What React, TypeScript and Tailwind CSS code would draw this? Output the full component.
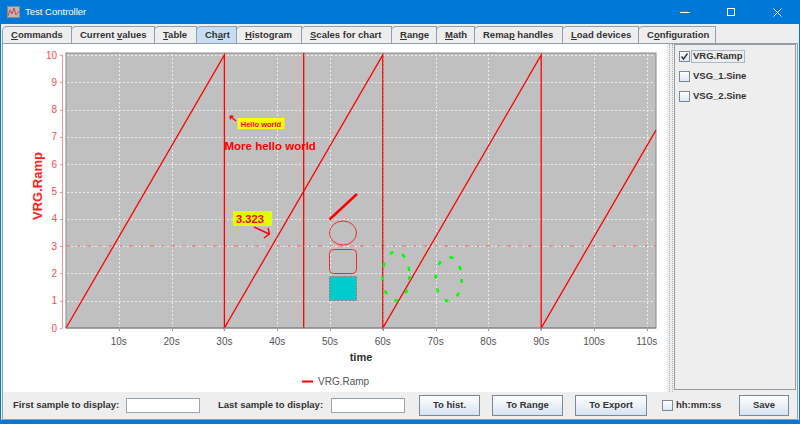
import React from 'react'

const X = (t: number) => 66 + t * 5.28
const Y = (v: number) => 328 - v * 27.3

const tabs: { label: string; u: number; w: number; active?: boolean }[] = [
  { label: 'Commands', u: 0, w: 70 },
  { label: 'Current values', u: 8, w: 84 },
  { label: 'Table', u: 0, w: 43 },
  { label: 'Chart', u: 2, w: 41, active: true },
  { label: 'Histogram', u: 0, w: 66 },
  { label: 'Scales for chart', u: 0, w: 91 },
  { label: 'Range', u: 0, w: 46 },
  { label: 'Math', u: 0, w: 39 },
  { label: 'Remap handles', u: 4, w: 89 },
  { label: 'Load devices', u: 0, w: 77 },
  { label: 'Configuration', u: 1, w: 78 },
]

const Tab = ({ label, u, w, active }: { label: string; u: number; w: number; active?: boolean }) => (
  <div
    style={{ width: w }}
    className={`h-[17px] flex items-center pl-[8px] border border-b-0 border-[#8e9fb3] rounded-tl-[5px] text-[9.5px] font-bold text-[#333] whitespace-pre ${
      active ? 'bg-[#c8ddf2]' : 'bg-[#eeeeee]'
    } -ml-px first:ml-0`}
  >
    <span>
      {label.slice(0, u)}
      <span className="underline">{label[u]}</span>
      {label.slice(u + 1)}
    </span>
  </div>
)

const Button = ({ children, w }: { children: React.ReactNode; w: string }) => (
  <div
    className={`${w} h-[21px] flex items-center justify-center border border-[#7a8a99] bg-gradient-to-b from-white to-[#d6e3f1] text-[9.5px] font-bold text-[#333]`}
  >
    {children}
  </div>
)

const Check = ({ on }: { on?: boolean }) => (
  <div className="w-[11px] h-[11px] border border-[#7a8a99] bg-gradient-to-b from-white to-[#dce6f2] flex items-center justify-center">
    {on && (
      <svg width="9" height="9" viewBox="0 0 9 9">
        <path d="M1.5 4.5 L3.5 7 L7.5 1.5" stroke="#333" strokeWidth="1.4" fill="none" />
      </svg>
    )}
  </div>
)

function Chart() {
  const vGrid = [10, 20, 30, 40, 50, 60, 70, 80, 90, 100, 110]
  const hGrid = [1, 2, 3, 4, 5, 6, 7, 8, 9, 10]
  const ramp = [
    [0, 0], [30, 10], [30, 0], [60, 10], [60, 0], [90, 10], [90, 0], [111.74, 7.25],
  ]
  return (
    <svg width="664" height="348" className="block">
      <g transform="translate(-3,-44)">
        <rect x="66" y="53" width="590" height="275" fill="#c0c0c0" stroke="#8a8a8a" />
        {vGrid.map((t) => (
          <line key={t} x1={Math.round(X(t)) + 0.5} x2={Math.round(X(t)) + 0.5} y1="54" y2="327" stroke="#ececec" strokeDasharray="2 2" />
        ))}
        {hGrid.map((v) => (
          <line key={v} x1="67" x2="655" y1={Math.round(Y(v)) + 0.5} y2={Math.round(Y(v)) + 0.5} stroke="#ececec" strokeDasharray="2 2" />
        ))}
        <line x1="66" x2="656" y1="246" y2="246" stroke="#ff5a5a" strokeWidth="1.2" strokeDasharray="4 8 2 7" />
        <line x1="303.7" x2="303.7" y1="53" y2="328" stroke="#ff0000" strokeWidth="1.3" />
        <polyline
          points={ramp.map(([t, v]) => `${X(t)},${Y(v)}`).join(' ')}
          fill="none"
          stroke="#ff0000"
          strokeWidth="1.3"
        />
        <line x1="66" x2="656" y1="328" y2="328" stroke="#808080" />
        {/* y axis */}
        <line x1="62.5" x2="62.5" y1={Y(10)} y2="328" stroke="#ff9090" />
        {[0, ...hGrid].map((v) => (
          <g key={v}>
            <line x1="60" x2="62.5" y1={Math.round(Y(v)) + 0.5} y2={Math.round(Y(v)) + 0.5} stroke="#ff9090" />
            <text x="57" y={Y(v) + 3.5} textAnchor="end" fontSize="10" fill="#ff4a4a">
              {v}
            </text>
          </g>
        ))}
        <text
          transform="translate(42,186) rotate(-90)"
          textAnchor="middle"
          fontSize="13"
          fontWeight="bold"
          fill="#ff2020"
        >
          VRG.Ramp
        </text>
        {/* x axis */}
        {vGrid.map((t) => (
          <g key={t}>
            <line x1={Math.round(X(t)) + 0.5} x2={Math.round(X(t)) + 0.5} y1="328" y2="331" stroke="#999" />
            <text x={X(t)} y="344.5" textAnchor="middle" fontSize="10" fill="#555">
              {t}s
            </text>
          </g>
        ))}
        <text x="361" y="361" textAnchor="middle" fontSize="11" fontWeight="bold" fill="#333">
          time
        </text>
        {/* annotations */}
        <rect x="237.5" y="118" width="47" height="11" fill="#ffff00" />
        <text x="261" y="126.5" textAnchor="middle" fontSize="7.5" fontWeight="bold" fill="#ff0000">
          Hello world
        </text>
        <path d="M236 121 L230 116 M230 116 L233.5 116.3 M230 116 L230.6 119.3" stroke="#ff0000" strokeWidth="1.3" fill="none" />
        <text x="224.5" y="150" fontSize="11.5" fontWeight="bold" fill="#ff0000">
          More hello world
        </text>
        <rect x="233" y="211" width="39" height="15" fill="#e1ff00" />
        <text x="236" y="222.5" fontSize="11.2" fontWeight="bold" fill="#ff0000">
          3.323
        </text>
        <path d="M254 227 L269 234 M268 228 L269.5 234 L264 238" stroke="#ff0000" strokeWidth="1.4" fill="none" />
        <line x1="329.5" y1="219.5" x2="357" y2="194" stroke="#ff0000" strokeWidth="2.5" />
        <ellipse cx="343" cy="233" rx="13.5" ry="12" fill="none" stroke="#e83030" />
        <rect x="329.5" y="249.5" width="27" height="24" rx="4" fill="none" stroke="#e83030" />
        <rect x="329.5" y="276.5" width="27" height="24" fill="#00cccc" stroke="#e03030" strokeDasharray="1 2" />
        <ellipse cx="396" cy="276" rx="13.5" ry="24.5" fill="none" stroke="#00ff00" strokeWidth="2.6" strokeDasharray="4 10" />
        <ellipse cx="448.7" cy="279" rx="13" ry="22" fill="none" stroke="#00ff00" strokeWidth="2.6" strokeDasharray="4 10" />
        {/* legend */}
        <line x1="302" x2="313" y1="381.5" y2="381.5" stroke="#ff0000" strokeWidth="2" />
        <text x="318" y="385" fontSize="10" fill="#555">
          VRG.Ramp
        </text>
      </g>
    </svg>
  )
}

export default function App() {
  return (
    <div className="w-[800px] h-[424px] bg-[#0078d7] flex flex-col overflow-hidden font-['Liberation_Sans',Arial,sans-serif]">
      <div className="h-[24px] flex items-center text-white shrink-0">
        <svg width="13" height="12" viewBox="0 0 13 12" className="ml-[7px]">
          <rect x="0.5" y="0.5" width="12" height="11" fill="#b8b8b8" stroke="#888" />
          <polyline points="1,10 3,4 5,8 7,2 9,9 12,5" fill="none" stroke="#e04040" strokeWidth="1" />
        </svg>
        <span className="ml-[5px] text-[9.5px]">Test Controller</span>
        <div className="ml-auto flex items-center h-full">
          <div className="w-[46px] flex justify-center">
            <div className="w-[10px] h-px bg-white" />
          </div>
          <div className="w-[46px] flex justify-center">
            <div className="w-[8px] h-[8px] border border-white" />
          </div>
          <div className="w-[46px] flex justify-center">
            <svg width="9" height="9" viewBox="0 0 9 9">
              <path d="M0.5 0.5 L8.5 8.5 M8.5 0.5 L0.5 8.5" stroke="white" strokeWidth="1" />
            </svg>
          </div>
        </div>
      </div>
      <div className="flex-1 mx-px mb-[4px] bg-[#eeeeee] flex flex-col">
        <div className="h-[19px] flex items-end pl-[1px] shrink-0">
          {tabs.map((t) => (
            <Tab key={t.label} {...t} />
          ))}
        </div>
        <div className="flex-1 mx-px border border-[#8e9fb3] flex flex-col">
          <div className="h-[348px] flex pr-px">
            <div className="w-[664px] bg-white">
              <Chart />
            </div>
            <div className="w-[7px] flex justify-center">
              <div className="w-[4px] h-full border-x border-dotted border-[#a9b3bf]" />
            </div>
            <div className="w-[122px] h-[346px] border border-[#9a9a9a] bg-[#eeeeee] pt-[5px] pl-[4px] flex flex-col gap-[7px] text-[9.5px] font-bold text-[#333]">
              <div className="flex items-center h-[13px]">
                <Check on />
                <span className="ml-px px-[1px] h-[13px] flex items-center border border-[#a8b8cc]">VRG.Ramp</span>
              </div>
              <div className="flex items-center h-[13px]">
                <Check />
                <span className="ml-[3px]">VSG_1.Sine</span>
              </div>
              <div className="flex items-center h-[13px]">
                <Check />
                <span className="ml-[3px]">VSG_2.Sine</span>
              </div>
            </div>
          </div>
          <div className="flex-1 flex items-center text-[9.5px] font-bold text-[#333]">
            <span className="ml-[10px] w-[106px] whitespace-nowrap">First sample to display:</span>
            <div className="ml-[7px] w-[74px] h-[15px] bg-white border border-[#9aa5b3]" />
            <span className="ml-[18px] w-[106px] whitespace-nowrap">Last sample to display:</span>
            <div className="ml-[7px] w-[74px] h-[15px] bg-white border border-[#9aa5b3]" />
            <div className="ml-[14px]">
              <Button w="w-[61px]">To hist.</Button>
            </div>
            <div className="ml-[12px]">
              <Button w="w-[71px]">To Range</Button>
            </div>
            <div className="ml-[12px]">
              <Button w="w-[72px]">To Export</Button>
            </div>
            <div className="ml-[15px]">
              <Check />
            </div>
            <span className="ml-[3px] w-[45px] whitespace-nowrap">hh:mm:ss</span>
            <div className="ml-[18px]">
              <Button w="w-[50px]">Save</Button>
            </div>
          </div>
        </div>
      </div>
    </div>
  )
}
